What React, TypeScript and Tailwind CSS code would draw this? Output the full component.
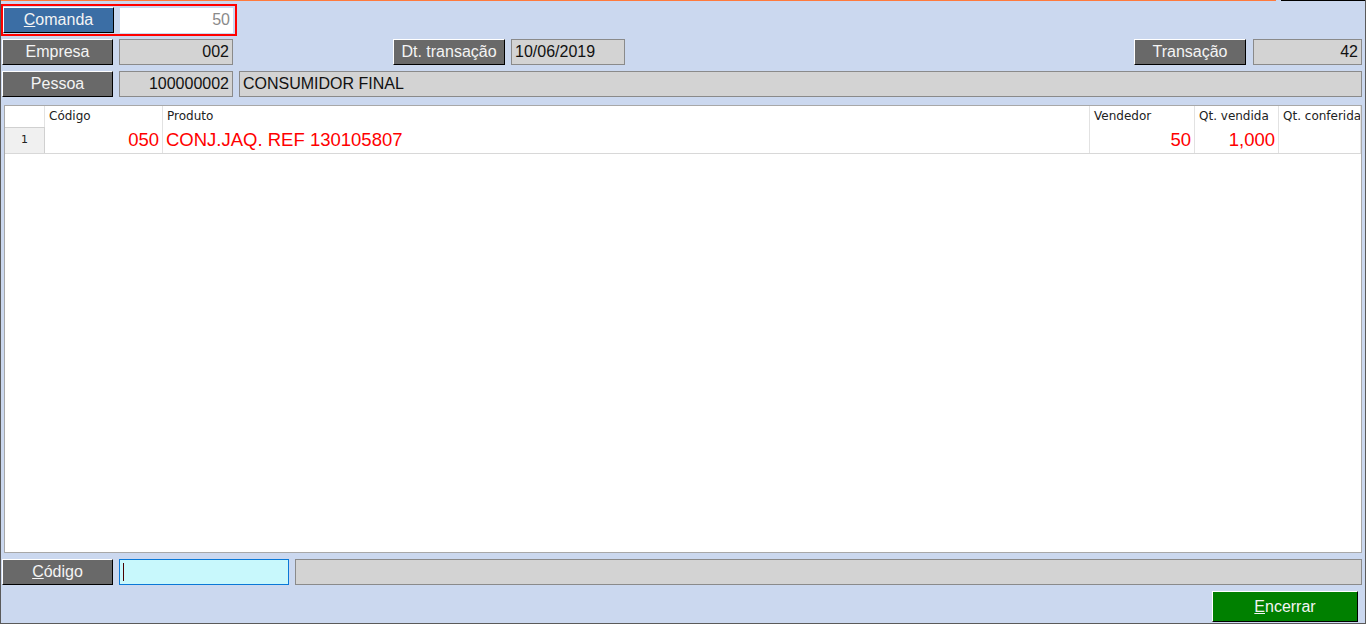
import React from 'react';

const font = { fontFamily: '"Liberation Sans", Arial, sans-serif' };
const gridFont = { fontFamily: '"DejaVu Sans", Tahoma, sans-serif' };

const Btn = ({ label, ul, w = 'w-[111px]', color = 'bg-[#696969]' }: any) => (
  <div
    className={`${w} h-[26px] ${color} border-t border-l border-white border-b border-r border-b-black border-r-black flex items-center justify-center text-[16px] text-[#f4f4f4] shrink-0`}
  >
    {ul ? (
      <span>
        <span className="underline">{label[0]}</span>
        {label.slice(1)}
      </span>
    ) : (
      label
    )}
  </div>
);

const Field = ({ value, w, right, className = '' }: any) => (
  <div
    className={`${w} h-[26px] bg-[#d3d3d3] border border-[#8a8a8a] flex items-center px-[3px] text-[16px] text-[#111] ${right ? 'justify-end' : ''} ${className}`}
  >
    {value}
  </div>
);

const cols = [
  { name: 'Código', w: 'w-[118px]', v: '050', right: true },
  { name: 'Produto', w: 'flex-1', v: 'CONJ.JAQ. REF 130105807', right: false },
  { name: 'Vendedor', w: 'w-[105px]', v: '50', right: true },
  { name: 'Qt. vendida', w: 'w-[84px]', v: '1,000', right: true },
  { name: 'Qt. conferida', w: 'w-[82px]', v: '', right: false },
];

export default function App() {
  return (
    <div
      className="w-[1366px] h-[624px] bg-[#cbd8ef] border-l border-r border-b border-[#5a5a5a] flex flex-col overflow-hidden"
      style={font}
    >
      <div className="flex h-[1px] shrink-0">
        <div className="w-[1275px] bg-[#ff7a3c]" />
        <div className="w-[5px]" />
        <div className="flex-1 bg-black" />
      </div>

      <div className="mt-[3px] w-[236px] h-[32px] border-2 border-[#ff0000] flex items-center">
        <Btn label="Comanda" ul color="bg-[#3b6ea5]" w="w-[111px]" />
        <div className="ml-[6px] w-[113px] h-[25px] bg-white flex items-center justify-end px-[3px] text-[16px] text-[#8a8a8a]">
          50
        </div>
      </div>

      <div className="mt-[3px] flex h-[26px] items-center">
        <div className="ml-[1px]" />
        <Btn label="Empresa" />
        <Field value="002" w="w-[114px] ml-[6px]" right />
        <div className="ml-[160px]" />
        <Btn label="Dt. transação" w="w-[112px]" />
        <Field value="10/06/2019" w="w-[114px] ml-[6px]" />
        <div className="flex-1" />
        <Btn label="Transação" w="w-[112px]" />
        <Field value="42" w="w-[109px] ml-[7px] mr-[3px]" right />
      </div>

      <div className="mt-[6px] flex h-[26px] items-center">
        <div className="ml-[1px]" />
        <Btn label="Pessoa" />
        <Field value="100000002" w="w-[114px] ml-[6px]" right />
        <Field value="CONSUMIDOR FINAL" w="flex-1 ml-[6px] mr-[3px]" />
      </div>

      <div className="mt-[8px] mx-[3px] h-[448px] bg-white border border-[#a8a8a8] flex flex-col">
        <div className="flex h-[21px] text-[12px] text-[#222]" style={gridFont}>
          <div className="w-[40px] border-r border-[#e2e2e2]" />
          {cols.map((c) => (
            <div key={c.name} className={`${c.w} border-r border-[#e2e2e2] px-[4px] pt-[1px] whitespace-nowrap overflow-hidden`}>
              {c.name}
            </div>
          ))}
        </div>
        <div className="flex h-[27px] border-b border-[#d8d8d8]">
          <div
            className="w-[40px] bg-[#f0f0f0] border-r border-t border-[#d0d0d0] flex items-center justify-center text-[11px] text-[#222]"
            style={gridFont}
          >
            1
          </div>
          {cols.map((c) => (
            <div
              key={c.name}
              className={`${c.w} border-r border-[#e2e2e2] px-[3px] flex items-center text-[18.5px] text-[#ff0000] whitespace-nowrap ${c.right ? 'justify-end' : ''}`}
            >
              {c.v}
            </div>
          ))}
        </div>
      </div>

      <div className="mt-[6px] flex h-[26px] items-center">
        <div className="ml-[1px]" />
        <Btn label="Código" ul />
        <div className="ml-[6px] w-[170px] h-[26px] bg-[#c8f8fc] border border-[#0a78d7] flex items-center px-[3px]">
          <div className="w-[1px] h-[18px] bg-[#4a0000]" />
        </div>
        <Field value="" w="flex-1 ml-[6px] mr-[3px]" />
      </div>

      <div className="mt-[6px] flex justify-end">
        <Btn label="Encerrar" ul w="w-[146px] h-[31px]" color="bg-[#008000]" />
        <div className="w-[7px]" />
      </div>
    </div>
  );
}
